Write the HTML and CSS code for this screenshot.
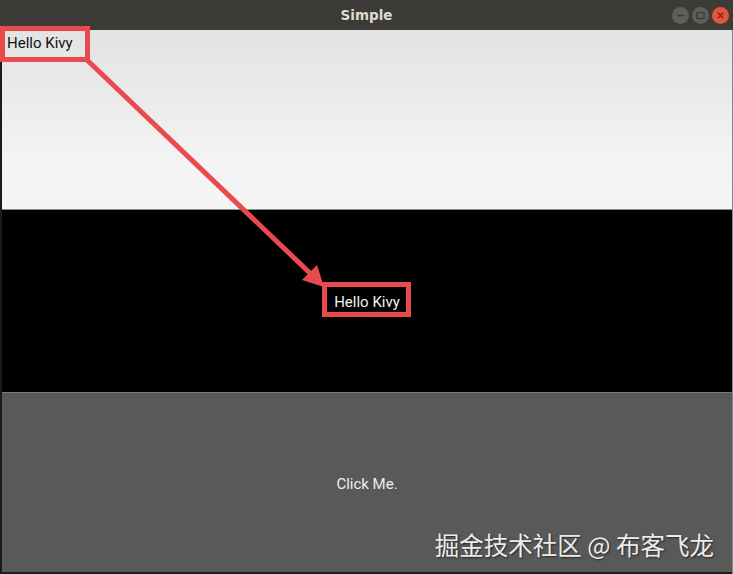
FILE: index.html
```html
<!DOCTYPE html>
<html>
<head>
<meta charset="utf-8">
<link rel="stylesheet" href="styles.css">
</head>
<body>
<div class="window">
  <div class="titlebar">
    <span></span>
    <span class="title">Simple</span>
    <div class="controls">
      <span class="wbtn">
        <svg width="17" height="17" viewBox="0 0 17 17"><line x1="5" y1="8.5" x2="12" y2="8.5" stroke="#3a3935" stroke-width="1.4"/></svg>
      </span>
      <span class="wbtn">
        <svg width="17" height="17" viewBox="0 0 17 17"><rect x="5" y="5.5" width="7" height="6" fill="none" stroke="#3a3935" stroke-width="1.2"/></svg>
      </span>
      <span class="wbtn close">
        <svg width="17" height="17" viewBox="0 0 17 17"><path d="M5.8 5.8 L11.2 11.2 M11.2 5.8 L5.8 11.2" stroke="#7a2a1c" stroke-width="1.4"/></svg>
      </span>
    </div>
  </div>
  <div class="content">
    <div class="pane top"><span class="label dark">Hello Kivy</span></div>
    <div class="pane middle"><span class="label light">Hello Kivy</span></div>
    <div class="pane bottom"><span class="btntext">Click Me.</span></div>
  </div>
  <svg class="annot" width="733" height="574" viewBox="0 0 733 574">
    <rect x="2.5" y="28.5" width="85" height="31" fill="none" stroke="#e94a4d" stroke-width="5"/>
    <rect x="324.5" y="284.5" width="84" height="30" fill="none" stroke="#e94a4d" stroke-width="5"/>
    <line x1="86" y1="59" x2="313" y2="276" stroke="#e94a4d" stroke-width="5"/>
    <polygon points="324,287 302,280 317,265" fill="#e94a4d"/>
  </svg>
  <div class="watermark">掘金技术社区 @ 布客飞龙</div>
</div>
</body>
</html>
```
FILE: styles.css
```css
html, body {
  margin: 0;
  padding: 0;
  background: #000;
}
.window {
  position: relative;
  width: 733px;
  height: 574px;
  overflow: hidden;
  display: flex;
  flex-direction: column;
  background: #3c3b37;
}
.titlebar {
  height: 30px;
  flex: 0 0 30px;
  display: grid;
  grid-template-columns: 1fr auto 1fr;
  align-items: center;
  background: #3c3b37;
}
.title {
  font-family: "DejaVu Sans", sans-serif;
  font-weight: bold;
  font-size: 13.5px;
  color: #dfdbd2;
}
.controls {
  justify-self: end;
  display: flex;
  gap: 3px;
  padding-right: 4px;
}
.wbtn {
  width: 17px;
  height: 17px;
  border-radius: 50%;
  background: #5f5e5a;
  display: flex;
}
.wbtn.close {
  background: #e5533b;
}
.content {
  flex: 1;
  display: flex;
  flex-direction: column;
  border-left: 2px solid #1b1b1b;
  border-right: 1px solid #8a8a8a;
}
.pane {
  display: flex;
}
.top {
  height: 179px;
  background: linear-gradient(to bottom, #e3e3e3 0%, #e9e9e9 30%, #f3f3f3 70%, #f5f5f5 100%);
  border-bottom: 1px solid #8c8c8c;
  align-items: flex-start;
}
.middle {
  height: 182px;
  background: #000;
  align-items: center;
  justify-content: center;
}
.bottom {
  flex: 1;
  background: #595959;
  border-top: 1px solid #7a7a7a;
  border-bottom: 2px solid #1e1e1e;
  align-items: center;
  justify-content: center;
}
.label {
  font-family: Roboto, sans-serif;
  font-size: 15px;
  line-height: 18px;
}
.dark {
  color: #111;
  padding: 4px 0 0 5px;
}
.light {
  color: #f2f2f2;
  margin-top: 1px;
}
.btntext {
  font-family: Roboto, sans-serif;
  font-size: 15px;
  color: #eeeeee;
  margin-top: 2px;
}
.annot {
  position: absolute;
  left: 0;
  top: 0;
  pointer-events: none;
}
.watermark {
  position: absolute;
  right: 19px;
  bottom: 14px;
  font-family: "Noto Sans CJK SC", sans-serif;
  font-size: 24.5px;
  line-height: 30px;
  color: #ececec;
  text-shadow: 1px 1px 2px rgba(0,0,0,0.6);
  white-space: nowrap;
}
```
